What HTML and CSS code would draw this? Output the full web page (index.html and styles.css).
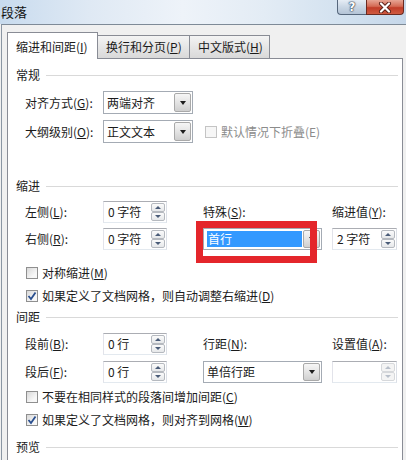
FILE: index.html
```html
<!DOCTYPE html>
<html lang="zh-CN">
<head>
<meta charset="utf-8">
<title>段落</title>
<link rel="stylesheet" href="styles.css">
</head>
<body>
<div class="titlebar">
  <span class="title">段落</span>
  <div class="capbtns">
    <span class="capbtn help">?</span>
    <span class="capbtn close">
      <svg width="14" height="11" viewBox="0 0 14 11"><path d="M3 1.5 L11 9.5 M11 1.5 L3 9.5" stroke="#5a2018" stroke-width="4" stroke-linecap="round"/><path d="M3 1.5 L11 9.5 M11 1.5 L3 9.5" stroke="#ffffff" stroke-width="2.2" stroke-linecap="round"/></svg>
    </span>
  </div>
</div>
<div class="client">
  <div class="tabs">
    <div class="tab active">缩进和间距(<u>I</u>)</div>
    <div class="tab">换行和分页(<u>P</u>)</div>
    <div class="tab last">中文版式(<u>H</u>)</div>
  </div>
  <div class="panel">
    <div class="section s-general">常规</div>
    <div class="general">
      <span class="lbl">对齐方式(<u>G</u>):</span>
      <div class="combo"><span class="val">两端对齐</span><span class="drop"><i class="tri"></i></span></div>
      <span></span>
      <span class="lbl">大纲级别(<u>O</u>):</span>
      <div class="combo"><span class="val">正文文本</span><span class="drop"><i class="tri"></i></span></div>
      <div class="check disabled inline"><span class="box"></span>默认情况下折叠(E)</div>
    </div>

    <div class="section s-indent">缩进</div>
    <div class="fourcol g-indent">
      <span class="lbl">左侧(<u>L</u>):</span>
      <div class="spin"><span class="val">0 字符</span><span class="btns"><span class="sb"><i class="up"></i></span><span class="sb"><i class="dn"></i></span></span></div>
      <span class="lbl">特殊(<u>S</u>):</span>
      <span class="lbl">缩进值(<u>Y</u>):</span>
      <span class="lbl">右侧(<u>R</u>):</span>
      <div class="spin"><span class="val">0 字符</span><span class="btns"><span class="sb"><i class="up"></i></span><span class="sb"><i class="dn"></i></span></span></div>
      <div class="combo wide focus"><span class="sel">首行</span><span class="drop"><i class="tri"></i></span><span class="mark"></span></div>
      <div class="spin w65"><span class="val">2 字符</span><span class="btns"><span class="sb"><i class="up"></i></span><span class="sb"><i class="dn"></i></span></span></div>
    </div>
    <div class="check c1"><span class="box"></span>对称缩进(<u>M</u>)</div>
    <div class="check c2"><span class="box checked"><svg width="10" height="10" viewBox="0 0 10 10"><path d="M1.5 5 L4 8 L8.5 1.5" fill="none" stroke="#2a4f8f" stroke-width="1.8"/></svg></span>如果定义了文档网格，则自动调整右缩进(<u>D</u>)</div>

    <div class="section s-spacing">间距</div>
    <div class="fourcol g-spacing">
      <span class="lbl">段前(<u>B</u>):</span>
      <div class="spin"><span class="val">0 行</span><span class="btns"><span class="sb"><i class="up"></i></span><span class="sb"><i class="dn"></i></span></span></div>
      <span class="lbl">行距(<u>N</u>):</span>
      <span class="lbl">设置值(<u>A</u>):</span>
      <span class="lbl">段后(<u>F</u>):</span>
      <div class="spin"><span class="val">0 行</span><span class="btns"><span class="sb"><i class="up"></i></span><span class="sb"><i class="dn"></i></span></span></div>
      <div class="combo wide"><span class="val">单倍行距</span><span class="drop"><i class="tri"></i></span></div>
      <div class="spin w65 disabled"><span class="val"></span><span class="btns"><span class="sb"><i class="up"></i></span><span class="sb"><i class="dn"></i></span></span></div>
    </div>
    <div class="check c3"><span class="box"></span>不要在相同样式的段落间增加间距(<u>C</u>)</div>
    <div class="check c4"><span class="box checked"><svg width="10" height="10" viewBox="0 0 10 10"><path d="M1.5 5 L4 8 L8.5 1.5" fill="none" stroke="#2a4f8f" stroke-width="1.8"/></svg></span>如果定义了文档网格，则对齐到网格(<u>W</u>)</div>

    <div class="section s-preview">预览</div>
  </div>
</div>
</body>
</html>
```

FILE: styles.css
```css
* { box-sizing: border-box; }
html, body { margin: 0; padding: 0; }
body {
  width: 406px;
  height: 460px;
  overflow: hidden;
  background: #f0f0f0;
  font-family: "Noto Sans CJK SC", "Noto Sans", sans-serif;
  font-size: 12px;
  line-height: 16px;
  color: #1b1b1b;
}
u { text-decoration: underline; text-underline-offset: 1px; }
i { display: block; }

/* title bar */
.titlebar {
  height: 24px;
  display: flex;
  justify-content: space-between;
  align-items: flex-start;
  background: linear-gradient(90deg, #c8dbee 0%, #dfe9f4 22%, #eef3f9 45%, #e3ecf5 65%, #d2e1ef 85%, #c6d7e9 100%);
}
.title {
  font-size: 13px;
  line-height: 24px;
  padding-left: 1px;
  color: #111;
}
.capbtns { display: flex; margin-right: 2px; }
.capbtn {
  height: 15px;
  display: flex;
  align-items: center;
  justify-content: center;
  border: 1px solid #56677c;
  border-top: none;
}
.help {
  width: 29px;
  border-radius: 0 0 0 4px;
  border-right: none;
  background: linear-gradient(#e6edf5, #c9d6e4 50%, #b4c4d6);
  color: #fff;
  font-family: "DejaVu Sans", sans-serif;
  font-weight: bold;
  font-size: 12px;
  line-height: 14px;
  text-shadow: 0 0 1px #2a3a50, 0 0 1px #2a3a50, 0 0 2px #2a3a50;
}
.close {
  width: 38px;
  border-radius: 0 0 4px 0;
  border-color: #6b2a20;
  background: linear-gradient(#e7a594, #d46b55 45%, #c13d28 55%, #cf5a40);
}

/* client area */
.client {
  margin-left: 1px;
  height: 436px;
  border-top: 1px solid #7e8a97;
  border-left: 1px solid #8a96a3;
  padding: 7px 0 0 5px;
}
.tabs {
  display: flex;
  align-items: flex-end;
  height: 26px;
  position: relative;
  z-index: 1;
}
.tab {
  height: 23px;
  border: 1px solid #898c95;
  border-left: none;
  border-bottom: none;
  padding: 3px 0 0 8px;
  background: linear-gradient(#f4f4f4, #e6e6e6 50%, #d9d9d9);
  white-space: nowrap;
  width: 92px;
}
.tab.active {
  width: 91px;
  height: 27px;
  margin-bottom: -1px;
  border-left: 1px solid #898c95;
  background: #fff;
  padding: 6px 0 0 8px;
}
.tab.last { width: 80px; }

.panel {
  width: 396px;
  height: 420px;
  border: 1px solid #898c95;
  background: #fff;
}

/* section headers */
.section {
  display: flex;
  align-items: center;
  gap: 6px;
  height: 16px;
  padding: 0 4px 0 8px;
}
.section::after {
  content: "";
  flex: 1;
  border-top: 1px solid #d9d9d9;
}
.s-general { margin-top: 8px; }
.s-indent { margin-top: 35px; }
.s-spacing { margin-top: 5px; }
.s-preview { margin-top: 11px; }

/* grids */
.general {
  display: grid;
  grid-template-columns: 78px 90px auto;
  grid-auto-rows: 23px;
  row-gap: 6px;
  align-items: center;
  padding-left: 17px;
  margin-top: 8px;
}
.fourcol {
  display: grid;
  grid-template-columns: 78px 100px 129px 65px;
  grid-auto-rows: 22px;
  align-items: center;
  padding-left: 17px;
}
.g-indent { margin-top: 7px; row-gap: 5px; }
.g-spacing { margin-top: 8px; row-gap: 6px; }
.lbl { white-space: nowrap; }

/* combo box */
.combo {
  position: relative;
  height: 100%;
  display: flex;
  align-items: stretch;
  border: 1px solid #a4abb4;
  background: #fff;
  padding-left: 3px;
}
.combo .val { flex: 1; align-self: center; white-space: nowrap; }
.combo.wide { width: 119px; }
.drop {
  width: 17px;
  margin: 1px;
  border: 1px solid #a9a9a9;
  border-radius: 2px;
  background: linear-gradient(#f6f6f6, #e4e4e4 50%, #cfcfcf);
  display: flex;
  align-items: center;
  justify-content: center;
}
.tri {
  width: 0;
  height: 0;
  border-left: 3.5px solid transparent;
  border-right: 3.5px solid transparent;
  border-top: 4px solid #1e1e1e;
}
.sel {
  flex: 1;
  align-self: center;
  height: 16px;
  margin-right: 0;
  padding-left: 1px;
  background: #3399ff;
  color: #fff;
}
.mark {
  position: absolute;
  left: -8px;
  top: -8px;
  width: 121px;
  height: 42px;
  border: 7px solid #e4262b;
  pointer-events: none;
}

/* spinner */
.spin {
  width: 64px;
  height: 100%;
  display: flex;
  align-items: center;
  border: 1px solid #abadb3;
  border-color: #abadb3 #dbdfe6 #e3e9ef #e2e3ea;
  background: #fff;
  padding-left: 4px;
}
.spin.w65 { width: 65px; }
.spin .val { flex: 1; white-space: nowrap; }
.btns {
  width: 15px;
  height: 100%;
  padding: 1px 1px 1px 0;
  display: flex;
  flex-direction: column;
  gap: 0;
}
.sb {
  flex: 1;
  border: 1px solid #b5b9bf;
  border-radius: 2px;
  background: linear-gradient(#fbfbfb, #e6e8ea);
  display: flex;
  align-items: center;
  justify-content: center;
}
.up, .dn { width: 0; height: 0; border-left: 3px solid transparent; border-right: 3px solid transparent; }
.up { border-bottom: 3px solid #4a5c78; }
.dn { border-top: 3px solid #4a5c78; }
.spin.disabled .sb { border-color: #d6d8db; background: #f4f4f4; }
.spin.disabled .up { border-bottom-color: #b8bfca; }
.spin.disabled .dn { border-top-color: #b8bfca; }

/* checkboxes */
.check {
  display: flex;
  align-items: center;
  height: 16px;
  padding-left: 18px;
  white-space: nowrap;
}
.check.inline { padding-left: 12px; }
.box {
  width: 12px;
  height: 12px;
  margin-right: 4px;
  border: 1px solid #8f8f8f;
  background: linear-gradient(135deg, #d8d8d8, #f7f7f7 70%);
  display: flex;
  align-items: center;
  justify-content: center;
}
.check.disabled { color: #8c8c8c; }
.check.disabled .box { border-color: #c4c4c4; background: #f6f6f6; }
.c1 { margin-top: 15px; }
.c2 { margin-top: 7px; }
.c3 { margin-top: 6px; }
.c4 { margin-top: 7px; }
```
